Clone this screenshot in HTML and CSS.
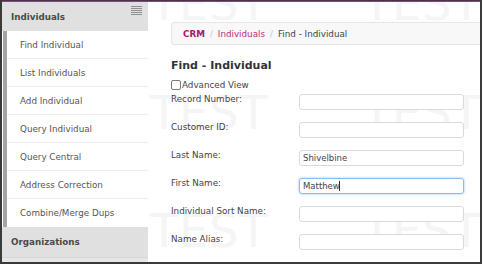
FILE: index.html
```html
<!DOCTYPE html>
<html lang="en">
<head>
    <meta charset="UTF-8">
    <meta name="viewport" content="width=device-width, initial-scale=1.0">
    <title>Find - Individual</title>
    <link rel="stylesheet" href="styles.css">
</head>
<body>
    <div class="frame">
        <aside class="sidebar">
            <div class="side-head">
                <span>Individuals</span>
                <svg class="burger" width="11" height="9" viewBox="0 0 11 9">
                    <rect x="0" y="0" width="11" height="1" fill="#8f8f8f"/>
                    <rect x="0" y="2" width="11" height="1" fill="#8f8f8f"/>
                    <rect x="0" y="4" width="11" height="1" fill="#8f8f8f"/>
                    <rect x="0" y="6" width="11" height="1" fill="#8f8f8f"/>
                    <rect x="0" y="8" width="11" height="1" fill="#8f8f8f"/>
                </svg>
            </div>
            <ul class="menu">
                <li>Find Individual</li>
                <li>List Individuals</li>
                <li>Add Individual</li>
                <li>Query Individual</li>
                <li>Query Central</li>
                <li>Address Correction</li>
                <li>Combine/Merge Dups</li>
            </ul>
            <div class="side-head side-head-org">Organizations</div>
            <div class="side-more"></div>
        </aside>

        <main class="content">
            <!-- test environment watermark, drawn by css -->
            <div class="wm wm-a" aria-hidden="true"></div>
            <div class="wm wm-b" aria-hidden="true"></div>
            <div class="wm wm-c" aria-hidden="true"></div>
            <div class="wm wm-d" aria-hidden="true"></div>
            <div class="wm wm-e" aria-hidden="true"></div>
            <div class="wm wm-f" aria-hidden="true"></div>

            <nav class="crumbs">
                <a class="crumb-root">CRM</a>
                <span class="sep">/</span>
                <a class="crumb-link">Individuals</a>
                <span class="sep">/</span>
                <span>Find - Individual</span>
            </nav>

            <h1>Find - Individual</h1>

            <label class="adv"><span class="box"></span>Advanced View</label>

            <form class="fields">
                <label for="record">Record Number:</label>
                <input type="text" id="record">

                <label for="customer">Customer ID:</label>
                <input type="text" id="customer">

                <label for="last">Last Name:</label>
                <input type="text" id="last" value="Shivelbine">

                <label for="first">First Name:</label>
                <span class="focus-wrap">
                    <input type="text" id="first" class="focused" value="Matthew">
                    <span class="caret"></span>
                </span>

                <label for="sort">Individual Sort Name:</label>
                <input type="text" id="sort">

                <label for="alias">Name Alias:</label>
                <input type="text" id="alias">

                <label for="more"></label>
                <input type="text" id="more">
            </form>
        </main>
    </div>
</body>
</html>
```

FILE: styles.css
```css
body {
    margin: 0;
    background: #fff;
    font-family: "DejaVu Sans", Verdana, sans-serif;
    font-size: 8.75px;
    color: #444;
}

.frame {
    display: flex;
    width: 482px;
    height: 264px;
    box-sizing: border-box;
    border: 2px solid #3a3a3a;
    border-top: 1px solid #553045;
    padding-top: 1px;
    box-shadow: inset 0 1px 0 #c4237f;
    overflow: hidden;
}

/* sidebar */
.sidebar {
    width: 146px;
    flex: none;
    display: flex;
    flex-direction: column;
    background: #fff;
}

.side-head {
    height: 29px;
    display: flex;
    align-items: center;
    justify-content: space-between;
    padding-left: 9px;
    background: #e0e0e0;
    font-weight: bold;
    color: #4a4a4a;
    flex: none;
}

.side-head-org {
    height: 30px;
}

.burger {
    align-self: flex-start;
    margin-top: 4px;
    margin-right: 6px;
}

.menu {
    list-style: none;
    margin: 0 0 0 1px;
    padding: 0;
    border-left: 4px solid #a4a4a4;
}

.menu li {
    height: 28px;
    box-sizing: border-box;
    display: flex;
    align-items: center;
    padding-left: 13px;
    border-bottom: 1px solid #ededed;
    color: #555;
}

.menu li:last-child {
    border-bottom: none;
}

.side-more {
    flex: 1;
    background: #e6e6e6;
    border-top: 1px solid #d6d6d6;
}

/* main area */
.content {
    flex: 1;
    position: relative;
    z-index: 0;
    padding: 20px 0 0 23px;
    overflow: hidden;
}

.wm {
    position: absolute;
    z-index: -1;
    width: 130px;
    height: 46px;
}

.wm::before {
    content: "TEST";
    font-size: 46px;
    line-height: 46px;
    letter-spacing: 1px;
    color: #f5f5f5;
}

.wm-a { left: 2px; top: -21px; }
.wm-b { left: 215px; top: -21px; }
.wm-c { left: 2px; top: 88px; }
.wm-d { left: 215px; top: 88px; }
.wm-e { left: 2px; top: 206px; }
.wm-f { left: 215px; top: 206px; }

.crumbs {
    height: 23px;
    box-sizing: border-box;
    display: flex;
    align-items: center;
    margin-right: -10px;
    padding-left: 11px;
    background: #f8f8f8;
    border: 1px solid #e6e6e6;
    border-radius: 3px;
}

.crumb-root {
    font-weight: bold;
    color: #a9176b;
}

.crumb-link {
    color: #c02c7e;
}

.sep {
    padding: 0 5px;
    color: #c8c8c8;
}

h1 {
    margin: 14px 0 0;
    font-size: 11px;
    line-height: 14px;
    color: #333;
}

.adv {
    display: flex;
    align-items: center;
    margin-top: 6px;
    line-height: 12px;
}

.box {
    width: 10px;
    height: 10px;
    box-sizing: border-box;
    border: 1px solid #7a7a7a;
    border-radius: 2px;
    background: #fff;
    margin-right: 1px;
}

.fields {
    display: grid;
    grid-template-columns: 128px 165px;
    row-gap: 12px;
    margin-top: 3px;
}

.fields label {
    line-height: 10px;
}

.fields input {
    width: 165px;
    height: 16px;
    box-sizing: border-box;
    margin: 0;
    padding: 0 3px;
    border: 1px solid #dadada;
    border-radius: 3px;
    background: #fff;
    font-family: "DejaVu Sans", Verdana, sans-serif;
    font-size: 8.5px;
    color: #444;
    outline: none;
}

.focus-wrap {
    position: relative;
    display: block;
}

.fields input.focused {
    border-color: #8dbce9;
    box-shadow: 0 0 3px rgba(90, 150, 220, 0.55);
}

.caret {
    position: absolute;
    left: 40px;
    top: 3px;
    width: 1px;
    height: 10px;
    background: #333;
}
```
